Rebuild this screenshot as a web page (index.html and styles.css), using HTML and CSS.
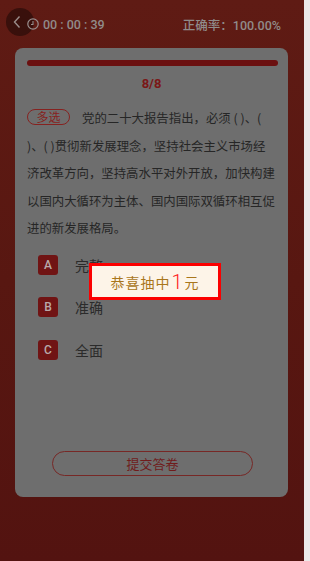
FILE: index.html
```html
<!DOCTYPE html>
<html lang="zh-CN">
<head>
<meta charset="utf-8">
<title>答题</title>
<link rel="stylesheet" href="styles.css">
</head>
<body>
<div class="screen">
  <div class="app">
    <header class="topbar">
      <button class="back" aria-label="返回">
        <svg width="10" height="14" viewBox="0 0 10 14"><path d="M7.5 1.5 L2.5 7 L7.5 12.5" fill="none" stroke="#9a8c8a" stroke-width="1.4"/></svg>
      </button>
      <svg class="clock" width="12" height="12" viewBox="0 0 12 12"><circle cx="6" cy="6" r="5.2" fill="none" stroke="#9a9090" stroke-width="1.2"/><path d="M6 3 V6.5 H4" fill="none" stroke="#9a9090" stroke-width="1.1"/></svg>
      <span class="time">00 : 00 : 39</span>
      <span class="rate">正确率：100.00%</span>
    </header>
    <section class="card">
      <div class="progress"></div>
      <div class="count">8/8</div>
      <div class="question"><span class="tag">多选</span><span class="qtext">党的二十大报告指出，必须 ( )、( )、( )贯彻新发展理念，坚持社会主义市场经济改革方向，坚持高水平对外开放，加快构建以国内大循环为主体、国内国际双循环相互促进的新发展格局。</span></div>
      <ul class="options">
        <li class="option"><span class="letter">A</span><span class="label">完整</span></li>
        <li class="option"><span class="letter">B</span><span class="label">准确</span></li>
        <li class="option"><span class="letter">C</span><span class="label">全面</span></li>
      </ul>
      <button class="submit">提交答卷</button>
    </section>
  </div>
  <div class="edge"></div>
</div>
<div class="toast">恭喜抽中<em>1</em>元</div>
</body>
</html>
```
FILE: styles.css
```css
* { box-sizing: border-box; }
html, body { margin: 0; padding: 0; }
body {
  width: 310px;
  height: 561px;
  overflow: hidden;
  font-family: Roboto, "Noto Sans CJK SC", sans-serif;
}
.screen {
  display: flex;
  width: 310px;
  height: 561px;
}
.app {
  width: 304px;
  height: 561px;
  background: linear-gradient(180deg, #5f1b14 0%, #581711 50%, #531310 100%);
}
.edge {
  width: 6px;
  background: #ebe9e9;
}
.topbar {
  height: 48px;
  display: flex;
  align-items: center;
  color: #908b8a;
  font-size: 12.5px;
  font-weight: 500;
}
.back {
  width: 28px;
  height: 28px;
  margin-left: 6px;
  margin-top: -4px;
  border: 0;
  padding: 0 6px 0 0;
  border-radius: 50%;
  background: rgba(20, 5, 4, 0.5);
  display: flex;
  align-items: center;
  justify-content: center;
}
.clock {
  margin-left: -7px;
  position: relative;
}
.time {
  margin-left: 4px;
}
.rate {
  margin-left: auto;
  margin-right: 23px;
}
.card {
  margin: 0 16px 0 15px;
  height: 449px;
  background: #6e6e6e;
  border-radius: 8px;
  padding: 12px 12px 0 12px;
  display: flex;
  flex-direction: column;
}
.progress {
  height: 6px;
  margin-right: -2px;
  border-radius: 3px;
  background: #6b1010;
}
.count {
  margin-top: 9px;
  text-align: center;
  font-size: 13px;
  font-weight: 700;
  line-height: 18px;
  color: #7a1717;
}
.question {
  margin: 12px 0 0;
  font-size: 12.4px;
  line-height: 27.5px;
  color: #262626;
  font-family: "Noto Sans CJK SC", sans-serif;
}
.tag {
  display: inline-block;
  height: 16px;
  padding: 0 8.5px;
  border: 1px solid #862220;
  border-radius: 8px;
  font-size: 12px;
  line-height: 14px;
  color: #862220;
  margin-right: 12px;
  vertical-align: 1px;
}
.options {
  list-style: none;
  margin: 1px 0 0;
  padding: 0 0 0 11px;
}
.option {
  height: 42.5px;
  display: flex;
  align-items: center;
}
.letter {
  width: 20px;
  height: 20px;
  border-radius: 3px;
  background: #701414;
  color: #b9a9a9;
  font-size: 12px;
  font-weight: 500;
  display: flex;
  align-items: center;
  justify-content: center;
}
.label {
  margin-left: 17px;
  font-size: 14px;
  color: #2b2b2b;
}
.submit {
  margin-top: auto;
  margin-bottom: 21px;
  margin-left: 25px;
  align-self: flex-start;
  width: 201px;
  height: 25px;
  border: 1px solid #772826;
  border-radius: 13px;
  background: transparent;
  color: #701c1c;
  font-family: "Noto Sans CJK SC", sans-serif;
  font-size: 13px;
  padding: 0;
}
.toast {
  position: fixed;
  left: 89px;
  top: 263px;
  width: 132px;
  height: 37px;
  border: 3px solid #fb0000;
  background: #fdf4e8;
  display: flex;
  align-items: center;
  justify-content: center;
  font-family: "Noto Sans CJK SC", sans-serif;
  font-size: 14px;
  letter-spacing: 1px;
  color: #a9761b;
  padding-top: 1px;
}
.toast em {
  font-style: normal;
  font-family: Roboto, sans-serif;
  font-weight: 300;
  font-size: 20px;
  color: #ff1a1a;
  line-height: 1;
  margin: 0 1px;
}
```
